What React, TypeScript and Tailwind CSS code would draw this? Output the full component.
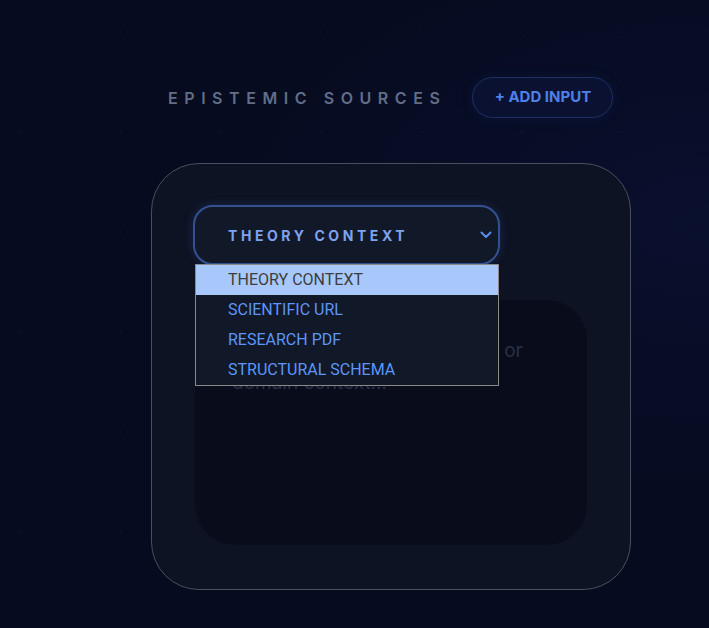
import React from "react";

const options = ["THEORY CONTEXT", "SCIENTIFIC URL", "RESEARCH PDF", "STRUCTURAL SCHEMA"];

export default function App() {
  return (
    <div className="relative h-[628px] w-full overflow-hidden bg-[#060b1f] font-['Inter',sans-serif]">
      <div className="pointer-events-none absolute inset-0 bg-[radial-gradient(circle,rgba(148,163,184,0.045)_1px,transparent_1.5px)] bg-[length:100px_100px] bg-[position:-29px_-18px]" />
      <div className="pointer-events-none absolute inset-0 bg-[radial-gradient(ellipse_at_100%_35%,rgba(16,26,80,0.3),transparent_50%)]" />
      <div className="relative ml-[151px] w-[480px] pt-[77px]">
        <div className="flex items-center gap-[26px] pl-[17px]">
          <h2 className="text-[16px] font-semibold uppercase tracking-[0.41em] text-[#626e88]">Epistemic Sources</h2>
          <button className="h-[41px] w-[141px] rounded-full border border-[#1d2f63] bg-[#0b1231] text-[15px] font-bold text-[#4f80ea] shadow-[0_0_12px_rgba(40,70,160,0.15)]">
            + ADD INPUT
          </button>
        </div>
        <div className="mt-[45px] h-[427px] rounded-[48px] border border-[#4a4f5e] bg-[#0e1323] px-[41px] pt-[41px]">
          <div className="relative w-[307px]">
            <div className="flex h-[60px] items-center rounded-[20px] border-2 border-[#33518f] bg-[#111827] pl-[33px] shadow-[0_0_10px_rgba(59,100,200,0.25)]">
              <span className="text-[14px] font-bold tracking-[0.255em] text-[#7ea2ef]">THEORY CONTEXT</span>
              <svg className="absolute right-[8px] top-[26px]" width="12" height="8" viewBox="0 0 12 8" fill="none">
                <path d="M1.5 1.5 6 6l4.5-4.5" stroke="#5b8def" strokeWidth="2" strokeLinecap="round" strokeLinejoin="round" />
              </svg>
            </div>
            <div className="absolute left-[2px] top-[59px] z-10 w-[304px] border border-[#8a8a8a] bg-[#111827] font-['Roboto',sans-serif]">
              {options.map((o, i) => (
                <div
                  key={o}
                  className={
                    i === 0
                      ? "flex h-[30px] items-center bg-[#a8c7fa] pl-[32px] text-[16px] text-[#3d3d3d]"
                      : "flex h-[30px] items-center pl-[32px] text-[16px] text-[#5e95f7]"
                  }
                >
                  {o}
                </div>
              ))}
            </div>
          </div>
          <textarea
            className="ml-[2px] mt-[35px] block h-[245px] w-[392px] resize-none rounded-[40px] bg-[#090c1b] px-[37px] pt-[35px] text-[19px] leading-[32px] text-[#2c3345] outline-none placeholder:text-[#2a3142]"
            placeholder={"Describe the core theory, text or\ndomain context..."}
          />
        </div>
      </div>
    </div>
  );
}
